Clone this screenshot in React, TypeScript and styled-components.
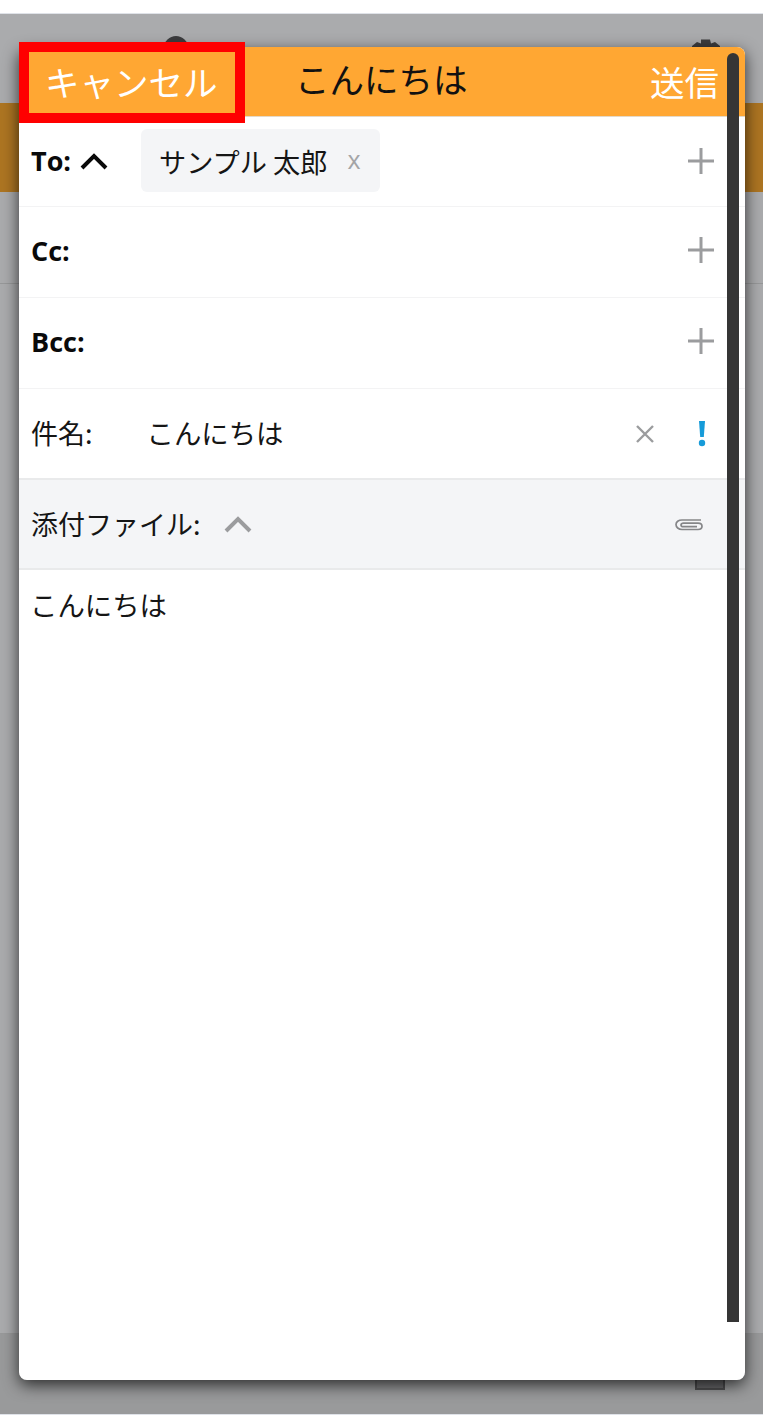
import React from "react";
import styled, { createGlobalStyle } from "styled-components";

const Global = createGlobalStyle`
  html, body { margin: 0; padding: 0; background: #fff; }
  body { font-family: "Open Sans", "Noto Sans CJK JP", sans-serif; }
`;

const Screen = styled.div`
  position: relative;
  width: 763px;
  height: 1417px;
  overflow: hidden;
  display: flex;
  flex-direction: column;
  background: #fff;
`;

const Backdrop = styled.div`
  margin-top: 13px;
  height: 1400px;
  border-top: 1px solid #dfe2e8;
  border-bottom: 1px solid #dfe2e8;
  background: #aaabad;
  display: flex;
  flex-direction: column;
`;

const BehindTop = styled.div`
  height: 89px;
  flex: none;
  display: flex;
  justify-content: space-between;
  padding: 20px 40px 0 158px;
  box-sizing: border-box;
`;

const BehindOrange = styled.div`
  height: 89px;
  flex: none;
  background: #ad7522;
`;

const BehindTabs = styled.div`
  height: 91px;
  flex: none;
  border-bottom: 1px solid #979899;
`;

const BehindList = styled.div`
  flex: 1;
`;

const BehindFooter = styled.div`
  height: 81px;
  flex: none;
  background: #999a9b;
  border-top: 1px solid #98999a;
  display: flex;
  justify-content: flex-end;
  padding: 36px 38px 0 0;
  box-sizing: border-box;
`;

const Modal = styled.section`
  position: absolute;
  left: 19px;
  top: 47px;
  width: 726px;
  height: 1333px;
  background: #fff;
  border-radius: 8px;
  overflow: hidden;
  display: flex;
  flex-direction: column;
`;

const ModalShadow = styled.div`
  position: absolute;
  left: 19px;
  top: 47px;
  width: 726px;
  height: 1333px;
  border-radius: 8px;
  box-shadow: 0 5px 16px rgba(0, 0, 0, 0.72);
`;

const Header = styled.header`
  height: 70px;
  flex: none;
  box-sizing: border-box;
  background: #ffa733;
  border-bottom: 1px solid #e4d9c8;
  display: grid;
  grid-template-columns: 250px 1fr auto;
  align-items: center;
  padding: 0 26px 4px 26px;
  font-size: 34.500px;
  line-height: 66px;
  font-family: "Noto Sans CJK JP", sans-serif;
`;

const HeaderAction = styled.span`
  color: #fff;
  position: relative;
  top: 1px;
`;

const HeaderTitle = styled.span`
  color: #111;
  position: relative;
  top: -2px;
`;

const Row = styled.div<{ $h: number; $tint?: boolean; $strong?: boolean; $lift?: number }>`
  height: ${(p) => p.$h}px;
  flex: none;
  box-sizing: border-box;
  display: flex;
  align-items: center;
  padding: 0 31px ${(p) => p.$lift ?? 0}px 12px;
  background: ${(p) => (p.$tint ? "#f4f5f7" : "#fff")};
  border-bottom: ${(p) => (p.$strong ? 2 : 1)}px solid ${(p) => (p.$strong ? "#e9eaeb" : "#f3f3f4")};
  font-family: "Noto Sans CJK JP", sans-serif;
  font-size: 27px;
  color: #151515;
`;

const BoldLabel = styled.span`
  font-family: "Open Sans", sans-serif;
  font-weight: 700;
  font-size: 27px;
  color: #0a0a0a;
`;

const Chip = styled.span`
  margin-left: 33px;
  height: 63px;
  width: 239px;
  box-sizing: border-box;
  background: #f4f5f7;
  border-radius: 6px;
  display: flex;
  align-items: center;
  padding-left: 18px;
  font-size: 27.200px;
  white-space: pre;
`;

const ChipClose = styled.span`
  margin-left: 20px;
  font-family: "Open Sans", sans-serif;
  font-size: 25px;
  line-height: 30px;
  color: #a3a4a6;
  position: relative;
  top: -2px;
`;

const Spacer = styled.span`
  flex: 1;
`;

const SubjectLabel = styled.span`
  margin-bottom: 3px;
`;

const Subject = styled.span`
  margin: 0 0 3px 54px;
  font-size: 27.400px;
`;

const SubjectClose = styled.svg`
  margin-right: 42px;
`;

const Bang = styled.svg`
  margin-right: 7px;
`;

const AttachChevron = styled.svg`
  margin-left: 23px;
`;

const ToChevron = styled.svg`
  margin-left: 9px;
`;

const Clip = styled.svg`
  margin-right: 11px;
`;

const Body = styled.div`
  flex: 1;
  padding: 14px 11px;
  font-family: "Noto Sans CJK JP", sans-serif;
  font-size: 27.400px;
  line-height: 40px;
  color: #151515;
`;

const Scrollbar = styled.div`
  position: absolute;
  left: 727px;
  top: 53px;
  width: 12px;
  height: 1269px;
  background: #353535;
  border-radius: 6px 6px 0 0;
`;

const Annotation = styled.div`
  position: absolute;
  left: 19px;
  top: 42px;
  width: 226px;
  height: 81px;
  box-sizing: border-box;
  border: 10px solid #ff0000;
`;

const Plus = () => (
  <svg width="26" height="26" viewBox="0 0 26 26" aria-hidden="true">
    <path d="M13 0v26M0 13h26" stroke="#9b9c9e" strokeWidth="3" fill="none" />
  </svg>
);

export default function App() {
  return (
    <Screen>
      <Global />
      <Backdrop>
        <BehindTop>
          <svg width="36" height="20" viewBox="0 0 36 20" aria-hidden="true">
            <circle cx="18" cy="14" r="12" fill="#3c3c3e" />
          </svg>
          <svg width="34" height="20" viewBox="0 0 34 20" aria-hidden="true">
            <path d="M12 5.500h9l1 4 4-1.500 5 4v8H3v-8l5-4 4 1.500z" fill="#3c3c3e" />
          </svg>
        </BehindTop>
        <BehindOrange />
        <BehindTabs />
        <BehindList />
        <BehindFooter>
          <svg width="30" height="20" viewBox="0 0 30 20" aria-hidden="true">
            <path d="M1 0h28v19H1z" fill="#6a6a6c" stroke="#4e4e50" strokeWidth="2" />
          </svg>
        </BehindFooter>
      </Backdrop>
      <ModalShadow />
      <Modal>
        <Header>
          <HeaderAction>キャンセル</HeaderAction>
          <HeaderTitle>こんにちは</HeaderTitle>
          <HeaderAction>送信</HeaderAction>
        </Header>
        <Row $h={90} $lift={2}>
          <BoldLabel>To:</BoldLabel>
          <ToChevron width="28" height="18" viewBox="0 0 28 18" aria-hidden="true">
            <path d="M2 16 14 4l12 12" stroke="#0a0a0a" strokeWidth="4" fill="none" />
          </ToChevron>
          <Chip>
            サンプル 太郎<ChipClose>x</ChipClose>
          </Chip>
          <Spacer />
          <Plus />
        </Row>
        <Row $h={91} $lift={4}>
          <BoldLabel>Cc:</BoldLabel>
          <Spacer />
          <Plus />
        </Row>
        <Row $h={91} $lift={4}>
          <BoldLabel>Bcc:</BoldLabel>
          <Spacer />
          <Plus />
        </Row>
        <Row $h={91} $strong>
          <SubjectLabel>件名:</SubjectLabel>
          <Subject>こんにちは</Subject>
          <Spacer />
          <SubjectClose width="20" height="20" viewBox="0 0 20 20" aria-hidden="true">
            <path d="M2 2l16 16M18 2 2 18" stroke="#9b9c9e" strokeWidth="2.400" fill="none" />
          </SubjectClose>
          <Bang width="10" height="26" viewBox="0 0 10 26" aria-hidden="true">
            <path d="M2 0h6L6.800 16H3.200z" fill="#169bd9" />
            <circle cx="5" cy="22" r="3.200" fill="#169bd9" />
          </Bang>
        </Row>
        <Row $h={90} $tint $strong $lift={1}>
          <span>添付ファイル:</span>
          <AttachChevron width="28" height="18" viewBox="0 0 28 18" aria-hidden="true">
            <path d="M2 16 14 4l12 12" stroke="#9b9c9e" strokeWidth="4" fill="none" />
          </AttachChevron>
          <Spacer />
          <Clip width="28" height="14" viewBox="0 0 28 14" aria-hidden="true">
            <path
              d="M26 3H7C3.500 3 1 4.800 1 7.500S3.500 12.500 7 12.500h16c2.500 0 4-1.300 4-3.200S25.500 6.200 23 6.200H8.500C7 6.200 6 7 6 8s1 1.700 2.500 1.700H22"
              stroke="#858688"
              strokeWidth="1.700"
              fill="none"
            />
          </Clip>
        </Row>
        <Body>こんにちは</Body>
      </Modal>
      <Scrollbar />
      <Annotation />
    </Screen>
  );
}
